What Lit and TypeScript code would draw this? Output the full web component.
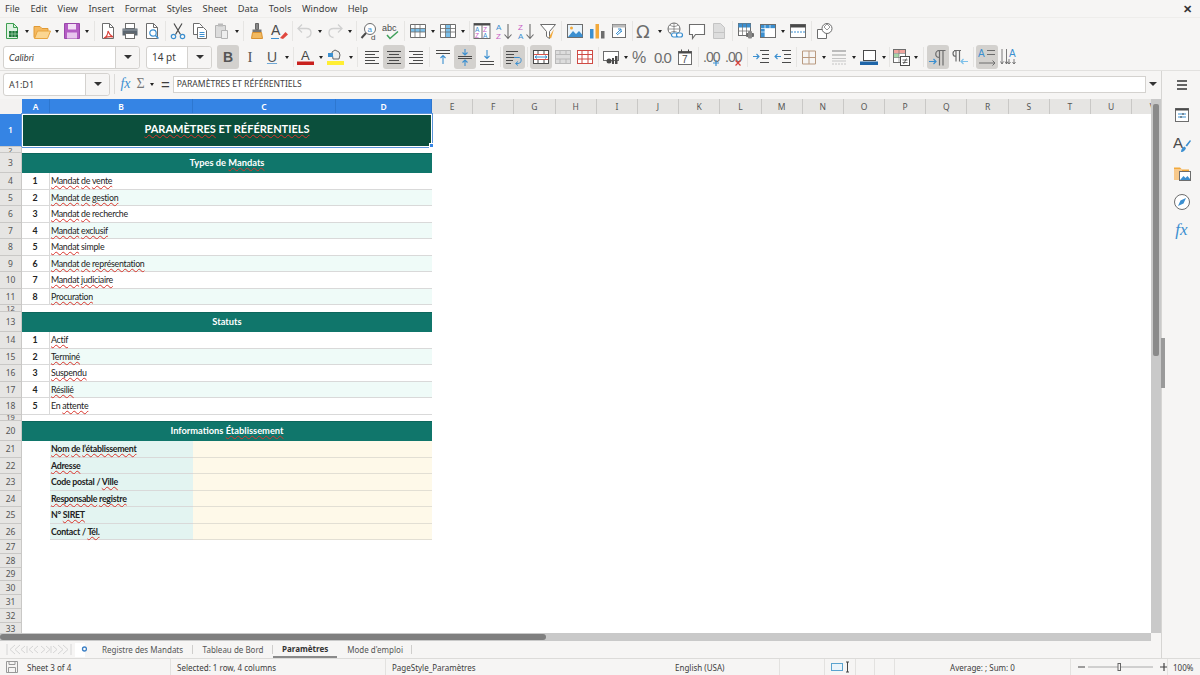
import { LitElement, html, css, svg, nothing } from 'lit';
import { customElement } from 'lit/decorators.js';

const G = '#6d6d6d';
const D = '#4a4a4a';
const B = '#3b8fd0';
const LB = '#7cc0ea';

const lines = (ys: number[][], c = D) =>
  ys.map(([x1, y, x2]) => svg`<path d="M${x1} ${y}H${x2}" stroke=${c} fill="none"/>`);

const doc = (c = G, f = '#fff') => svg`<path d="M3.5 1.5h7l4 4v11h-11z" fill=${f} stroke=${c}/><path d="M10.5 1.5v4h4" fill="none" stroke=${c}/>`;

const ICONS: Record<string, unknown> = {
  new: svg`<path d="M3.5 1.5h7l4 4v11h-11z" fill="#dff2e2" stroke="#3f9f52"/><path d="M10.5 1.5v4h4" fill="none" stroke="#3f9f52"/><rect x="6" y="9" width="9" height="6" fill="#1e7a3a"/><path d="M9 9v6M12 9v6M6 12h9" stroke="#bfe5c6" stroke-width=".6"/>`,
  open: svg`<path d="M1 4.5h6l2 2h6v3H5l-2.500 6H1z" fill="#f5b95f" stroke="#e09a35"/><path d="M4.500 9h13l-3 7.500H1.500z" fill="#fbd691" stroke="#e8a540"/>`,
  save: svg`<path d="M1.500 1.500h15v15h-15z" fill="#b45cc4" stroke="#9a46aa"/><rect x="5" y="2" width="8" height="5.500" fill="#f3def6"/><rect x="4" y="10.500" width="10" height="6" fill="#e8c5ee"/>`,
  pdf: svg`${doc()}<path d="M9 9c0 3-2 6-4 7 3-1 6-2 9-1-2-1-4-3-5-6z" fill="none" stroke="#d9413a" stroke-width="1.100"/>`,
  print: svg`<rect x="4.500" y="1.500" width="9" height="5" fill="#fff" stroke="${G}"/><path d="M1.500 6.500h15v7h-15z" fill="#5c6670"/><rect x="4.500" y="11.500" width="9" height="5" fill="#fff" stroke="${G}"/><path d="M2 8h14" stroke="#9aa3ab"/>`,
  preview: svg`${doc()}<circle cx="10" cy="11" r="3.200" fill="#fff" stroke="${B}" stroke-width="1.200"/><path d="M12.500 13.500l3 3" stroke="${B}" stroke-width="1.500"/>`,
  cut: svg`<path d="M5 1.500l6.500 11M13 1.500L6.500 12.500" stroke="${D}" stroke-width="1.200" fill="none"/><circle cx="4.500" cy="14.500" r="2.200" fill="none" stroke="${B}" stroke-width="1.200"/><circle cx="13.500" cy="14.500" r="2.200" fill="none" stroke="${B}" stroke-width="1.200"/>`,
  copy: svg`<path d="M2.500 1.500h6l3 3v8h-9z" fill="#fff" stroke="${G}"/><path d="M6.500 5.500h6l3 3v8h-9z" fill="#fff" stroke="${G}"/><path d="M8.500 10.500h5M8.500 12.500h5M8.500 14.500h5" stroke="${B}"/>`,
  paste: svg`<path d="M2.500 3.500h10v12h-10z" fill="#dcdcdc" stroke="#b4b4b4"/><rect x="5" y="1.500" width="5" height="3" fill="#bbb"/><path d="M8.500 8.500h6v8h-6z" fill="#eee" stroke="#b4b4b4"/>`,
  clone: svg`<path d="M7.500 1.500h3v6h-3z" fill="#888" stroke="#666"/><path d="M4.500 7.500h9v3h-9z" fill="#777"/><path d="M4.500 10.500h9l1 6h-11z" fill="#f2b95f" stroke="#d99130"/>`,
  clear: svg`<text x="1" y="13" font-size="14" font-family="Liberation Sans" fill="${D}">A</text><path d="M10 16l5.500-6 2.500 2.500-5 4.500z" fill="#e0483f"/><path d="M1 16.500h8" stroke="${B}"/>`,
  undo: svg`<path d="M6 2.500L2 6.500l4 4M2.500 6.500h8c6 0 6 8 0 9" fill="none" stroke="#d0d0d0" stroke-width="1.300"/>`,
  redo: svg`<path d="M12 2.500l4 4-4 4M15.500 6.500h-8c-6 0-6 8 0 9" fill="none" stroke="#d0d0d0" stroke-width="1.300"/>`,
  find: svg`<circle cx="10" cy="7" r="5.500" fill="#fff" stroke="${G}"/><text x="7.500" y="10" font-size="8" font-family="Liberation Sans" fill="${B}">a</text><path d="M6 11l-4.500 5" stroke="${D}" stroke-width="2"/><text x="11" y="17.500" font-size="8" font-family="Liberation Sans" fill="${D}">d</text>`,
  spell: svg`<text x="0" y="9" font-size="9" font-family="Liberation Sans" fill="${D}">abc</text><path d="M5 13l3 3.500 8-7" fill="none" stroke="#3fa05a" stroke-width="1.500"/>`,
  row: svg`<path d="M1.500 2.500h15v13h-15z" fill="#fff" stroke="${G}"/><rect x="2" y="6.500" width="14" height="3.500" fill="${LB}"/><path d="M6 3v12M11 3v12M2 6.500h14M2 10h14" stroke="${G}" stroke-width=".8"/>`,
  col: svg`<path d="M1.500 2.500h15v13h-15z" fill="#fff" stroke="${G}"/><rect x="6.500" y="3" width="5" height="12" fill="${LB}"/><path d="M6.500 3v12M11.500 3v12M2 6.500h14M2 10h14" stroke="${G}" stroke-width=".8"/>`,
  sort: svg`<rect x="1" y="1.500" width="16" height="15" fill="#fff" stroke="${G}"/><path d="M1 2.500h16" stroke="${D}" stroke-width="2"/><path d="M9 3v13" stroke="${G}"/><text x="2" y="9.500" font-size="6.500" font-family="Liberation Sans" fill="${B}">A</text><text x="2" y="15.500" font-size="6.500" font-family="Liberation Sans" fill="#c75cc4">Z</text><text x="10" y="9.500" font-size="6.500" font-family="Liberation Sans" fill="#c75cc4">Z</text><text x="10" y="15.500" font-size="6.500" font-family="Liberation Sans" fill="${B}">A</text>`,
  asc: svg`<text x="1" y="8" font-size="8" font-family="Liberation Sans" fill="${B}">A</text><text x="1" y="16.500" font-size="8" font-family="Liberation Sans" fill="#c75cc4">Z</text><path d="M13 2v14M9.500 12.500l3.500 4 3.500-4" fill="none" stroke="${G}" stroke-width="1.100"/>`,
  desc: svg`<text x="1" y="8" font-size="8" font-family="Liberation Sans" fill="#c75cc4">Z</text><text x="1" y="16.500" font-size="8" font-family="Liberation Sans" fill="${B}">A</text><path d="M13 2v14M9.500 12.500l3.500 4 3.500-4" fill="none" stroke="${G}" stroke-width="1.100"/>`,
  filter: svg`<path d="M1.500 2.500h15l-6 7v7l-3-2v-5z" fill="#fff" stroke="${G}"/><path d="M15 7l-5 8 2 1.500z" fill="#f2a93b"/>`,
  image: svg`<rect x="1.500" y="2.500" width="15" height="13" fill="#eaf4fb" stroke="${G}"/><circle cx="5.500" cy="6" r="1.500" fill="#f2a93b"/><path d="M2 15l5-6 3 3 3-3 3.500 4v2z" fill="${B}"/>`,
  chart: svg`<rect x="2" y="7" width="3.500" height="9.500" fill="${B}"/><rect x="7.500" y="2" width="3.500" height="14.500" fill="#f2a93b"/><rect x="13" y="9" width="3.500" height="7.500" fill="${G}"/>`,
  pivot: svg`<rect x="2.500" y="2.500" width="13" height="13" fill="#fff" stroke="${G}"/><rect x="2.500" y="2.500" width="13" height="3" fill="#bbb"/><path d="M6 12l5-5M11 7H8M11 7v3M7 13l5-4" fill="none" stroke="${B}"/>`,
  omega: svg`<text x="0" y="15.500" font-size="18" font-family="DejaVu Sans" fill="${G}">Ω</text>`,
  link: svg`<circle cx="8" cy="7" r="6" fill="#fff" stroke="${G}"/><path d="M2 7h12M8 1v12M4 3c2 2 6 2 8 0M4 11c2-2 6-2 8 0" stroke="${G}" stroke-width=".7" fill="none"/><rect x="5.500" y="11" width="6" height="4" rx="2" fill="#fff" stroke="${B}" stroke-width="1.200"/><rect x="10.500" y="11" width="6" height="4" rx="2" fill="#fff" stroke="${B}" stroke-width="1.200"/>`,
  comment: svg`<path d="M1.500 2.500h15v10h-9l-3 4v-4h-3z" fill="#fff" stroke="${G}" stroke-width="1.100"/>`,
  header: svg`<path d="M3.500 1.500h7l4 4v11h-11z" fill="#ddd" stroke="#c4c4c4"/><path d="M4 10.500h10" stroke="#c4c4c4"/>`,
  hf: svg`<rect x="1.500" y="1.500" width="12" height="12" fill="#fff" stroke="${G}"/><rect x="1.500" y="1.500" width="12" height="4" fill="${B}"/><path d="M5.500 2v11M9.500 2v11M2 9h11" stroke="${G}" stroke-width=".7"/><rect x="9" y="11" width="8" height="4" rx="1" fill="${G}"/><rect x="11" y="9" width="4" height="7.500" rx="1" fill="#888"/>`,
  freeze: svg`<rect x="1.500" y="2.500" width="15" height="13" fill="#fff" stroke="${G}"/><rect x="2" y="3" width="14" height="3.500" fill="${B}"/><rect x="2" y="3" width="4" height="12" fill="${B}"/><path d="M6 3v12M11 3v12M2 6.500h14M2 10h14" stroke="#fff" stroke-width=".7"/>`,
  split: svg`<rect x="1.500" y="2.500" width="15" height="13" fill="#fff" stroke="${G}"/><path d="M1.500 2.500h15v3h-15z" fill="${D}"/><path d="M2 10h14" stroke="${B}" stroke-dasharray="2 1"/>`,
  shapes: svg`<path d="M1.500 7.500h9v9h-9z" fill="#fff" stroke="${G}"/><circle cx="11" cy="6.500" r="5" fill="#fff" stroke="${G}"/><path d="M8 5l3-3 3 3-3 3z" fill="none" stroke="${G}" stroke-width=".7"/>`,
  left: lines([[2, 3.500, 16], [2, 6.500, 12], [2, 9.500, 16], [2, 12.500, 12], [2, 15.500, 16]]),
  center: lines([[2, 3.500, 16], [4, 6.500, 14], [2, 9.500, 16], [4, 12.500, 14], [2, 15.500, 16]]),
  right: lines([[2, 3.500, 16], [6, 6.500, 16], [2, 9.500, 16], [6, 12.500, 16], [2, 15.500, 16]]),
  top: svg`${lines([[2, 2.500, 16], [2, 5.500, 16]])}<path d="M9 16V7.500M6.500 10L9 7.500l2.500 2.500" fill="none" stroke="${B}" stroke-width="1.100"/>`,
  mid: svg`${lines([[2, 8.500, 16], [2, 10.500, 16]])}<path d="M9 1v6M6.500 4.500L9 7l2.500-2.500M9 18v-6M6.500 14.500L9 12l2.500 2.500" fill="none" stroke="${B}" stroke-width="1.100"/>`,
  bottom: svg`${lines([[2, 13.500, 16], [2, 16.500, 16]])}<path d="M9 2v8.500M6.500 8L9 10.500 11.500 8" fill="none" stroke="${B}" stroke-width="1.100"/>`,
  wrap: svg`${lines([[1, 3.500, 13], [1, 6.500, 9], [1, 9.500, 13], [1, 12.500, 8], [1, 15.500, 6]])}<path d="M9 9.500h5c3 0 3 6-1 6h-2M13 13.500l-2.500 2 2.500 2" fill="none" stroke="${B}"/>`,
  merge: svg`<rect x="1.500" y="2.500" width="15" height="13" fill="#fff" stroke="${D}"/><path d="M2 6.500h14M2 11.500h14" stroke="#d8534b"/><path d="M6 3v3M12 3v3M6 12v3M12 12v3" stroke="${D}"/><path d="M3 9h12M3 9l2-1.500M3 9l2 1.500M15 9l-2-1.500M15 9l-2 1.500" stroke="${B}" fill="none"/>`,
  unmergeg: svg`<rect x="1.500" y="2.500" width="15" height="13" fill="#ddd" stroke="#b9b9b9"/><path d="M2 6.500h14M2 11h14M6 3v3M12 3v3M6 11v4M12 11v4" stroke="#b9b9b9"/>`,
  unmerge: svg`<rect x="1.500" y="2.500" width="15" height="13" fill="#fff" stroke="#cf4a44"/><path d="M2 6.500h14M2 11h14M6 3v12M12 3v12" stroke="#cf4a44"/>`,
  currency: svg`<rect x="1.500" y="3.500" width="15" height="9" fill="#fff" stroke="${G}"/><circle cx="7" cy="13" r="2.500" fill="${D}"/><rect x="10" y="10" width="2" height="6" fill="${D}"/><rect x="13" y="8" width="2.500" height="8" fill="${D}"/>`,
  percent: svg`<text x="0" y="15" font-size="16" font-family="Liberation Sans" fill="${G}">%</text>`,
  number: svg`<text x="0" y="15" font-size="15" letter-spacing="-1.500" font-family="Liberation Sans" fill="${G}">0.0</text>`,
  date: svg`<rect x="2.500" y="3.500" width="13" height="13" fill="#fff" stroke="${G}"/><path d="M2.500 3.500h13v2h-13z" fill="${D}"/><path d="M5.500 1.500v3M12.500 1.500v3" stroke="${D}"/><text x="6" y="15" font-size="10" font-family="Liberation Sans" fill="${D}">7</text>`,
  adddec: svg`<text x="0" y="14" font-size="14" letter-spacing="-1" font-family="Liberation Sans" fill="${G}">.00</text><path d="M13 12v6M10 15h6" stroke="${B}" stroke-width="1.200"/>`,
  deldec: svg`<text x="0" y="14" font-size="14" letter-spacing="-1" font-family="Liberation Sans" fill="${G}">.00</text><path d="M10.500 12.500l5 5M15.500 12.500l-5 5" stroke="#d9413a" stroke-width="1.200"/>`,
  indent: svg`${lines([[8, 2.500, 17], [10, 6.500, 17], [10, 10.500, 17], [8, 14.500, 17]])}<path d="M1 8.500h6M4.500 6L7 8.500 4.500 11" fill="none" stroke="${B}" stroke-width="1.100"/>`,
  outdent: svg`${lines([[8, 2.500, 17], [10, 6.500, 17], [10, 10.500, 17], [8, 14.500, 17]])}<path d="M7 8.500H1M3.500 6L1 8.500 3.500 11" fill="none" stroke="${B}" stroke-width="1.100"/>`,
  borders: svg`<path d="M2.500 3h13v13h-13zM2.500 9.500h13M9 3v13" fill="none" stroke="#b99a80" stroke-width="1"/>`,
  linestyle: svg`<path d="M2 3h14" stroke="#bbb" stroke-width="2"/><path d="M2 7h14" stroke="#bbb" stroke-width="1.500"/><path d="M2 10.500h14M2 13h14" stroke="#c4c4c4"/><path d="M2 16h14" stroke="#c4c4c4" stroke-dasharray="2 1"/>`,
  bcolor: svg`<rect x="3.500" y="2.500" width="12" height="10" fill="#fff" stroke="${D}"/><path d="M0 13.500h18v3.500H0z" fill="#1f65a8"/>`,
  cond: svg`<rect x="1.500" y="1.500" width="12" height="13" fill="#fff" stroke="${G}"/><rect x="2" y="2" width="11" height="3" fill="#f1a49d"/><rect x="2" y="6" width="5" height="3.500" fill="#a5d6a7"/><path d="M7 2v12M2 5.500h11M2 9.500h11" stroke="${G}" stroke-width=".6"/><rect x="8.500" y="8.500" width="9" height="9" fill="#fff" stroke="${D}"/><path d="M10.500 12h5M10.500 14.500h5M14.500 10.500l-3 5.500" stroke="${D}" stroke-width=".8"/>`,
  ltr: svg`<path d="M8.500 2.500h8M10.500 2.500v15M14 2.500v15M10.500 2.500c-5 0-5 7 0 7" fill="none" stroke="${G}" stroke-width="1.200"/><path d="M0 13.500h7M4.500 11L7 13.500 4.500 16" fill="none" stroke="${B}" stroke-width="1.200"/>`,
  rtl: svg`<path d="M3 2.500h7M5 2.500v11M8.500 2.500v11M5 2.500c-4 0-4 6 0 6" fill="none" stroke="${G}" stroke-width="1.200"/><path d="M17 13.500h-7M12.500 11L10 13.500l2.500 2.500" fill="none" stroke="${LB}" stroke-width="1.200"/>`,
  thoriz: svg`<text x="0" y="9" font-size="10" font-family="Liberation Sans" fill="${B}">A</text><path d="M9 2.500h8M9 6.500h8" stroke="${G}"/><path d="M1 15h16M14.500 12.500L17 15l-2.500 2.500" fill="none" stroke="${G}"/>`,
  tvert: svg`<text x="9" y="9" font-size="10" font-family="Liberation Sans" fill="${B}">A</text><path d="M2 1v15M6.500 1v15M9 11v5M14 11v5M.5 13.500L2 16l1.500-2.500M5 13.500L6.500 16 8 13.500M7.500 14L9 16l1.500-2M12.500 14L14 16l1.500-2" fill="none" stroke="${G}" stroke-width=".9"/>`,
  props: svg`<rect x="2.500" y="2.500" width="13" height="13" fill="#fff" stroke="${G}"/><path d="M2.500 2.500h13v2h-13z" fill="${D}"/><path d="M5 8h8M5 11h8" stroke="${B}"/><path d="M10 7v2M8 10v2" stroke="${D}"/>`,
  styles: svg`<text x="0" y="13" font-size="15" font-family="Liberation Sans" fill="${D}">A</text><path d="M8 17c0-3 2-5 3.500-5.500l1.500 1.500c-.5 2-3 4.500-5 4zM12.500 10.500L17 5l1 1-4 5.500z" fill="${B}"/>`,
  gallery: svg`<path d="M1 3.500h6l2 2h7v2H1z" fill="#f2a93b"/><path d="M1 5h8v11H1z" fill="#f8c98b"/><rect x="6.500" y="7.500" width="11" height="9" fill="#fff" stroke="${G}"/><path d="M7 16l3.500-4 2 2 2-2 2.500 3v1z" fill="${B}"/>`,
  nav: svg`<circle cx="9" cy="9" r="7.500" fill="#fff" stroke="${G}"/><path d="M5 13l2.500-5.500L13 5l-2.500 5.500z" fill="${B}"/>`,
};

const icon = (n: string, size = 18) => html`<svg width=${size} height=${size} viewBox="0 0 18 18">${ICONS[n]}</svg>`;

// [icon, has dropdown, active] or a number for a separator of that width
type Tool = [string, boolean?, boolean?] | number;

const TB1: Tool[] = [
  ['new', true], ['open', true], ['save', true], 6,
  ['pdf'], ['print'], ['preview'], 4,
  ['cut'], ['copy'], ['paste', true], 5,
  ['clone'], ['clear'], 4,
  ['undo', true], ['redo', true], 4,
  ['find'], ['spell'], 5,
  ['row', true], ['col', true], 4,
  ['sort'], ['asc'], ['desc'], ['filter'], 5,
  ['image'], ['chart'], ['pivot'], 4,
  ['omega', true], ['link'], ['comment'], ['header'], 5,
  ['hf'], ['freeze', true], ['split'], 5,
  ['shapes'],
];

const TB2A: Tool[] = [
  ['left'], ['center', false, true], ['right'], 5,
  ['top'], ['mid', false, true], ['bottom'], 5.5,
  ['wrap', false, true], 5, ['merge', false, true], ['unmergeg'], ['unmerge'], 4,
  ['currency', true], ['percent'], ['number'], ['date'], 5,
  ['adddec'], ['deldec'], 5,
  ['indent'], ['outdent'], 4,
  ['borders', true], ['linestyle', true], ['bcolor', true], 2,
  ['cond', true], 7,
  ['ltr', false, true], ['rtl'], 5,
  ['thoriz', false, true], ['tvert'],
];

type Row =
  | { h: number; n?: undefined }
  | { h: number; title: string }
  | { h: number; head: string }
  | { h: number; n: number; text: string; alt: boolean }
  | { h: number; label: string };

const items = (list: string[]): Row[] =>
  list.map((text, i) => ({ h: 16.5, n: i + 1, text, alt: i % 2 === 1 }));

// a leading ~ marks a word the spell checker underlines
const ROWS: Row[] = [
  { h: 33, title: '~PARAMÈTRES ET ~RÉFÉRENTIELS' },
  { h: 6 },
  { h: 20, head: 'Types de ~Mandats' },
  ...items(['~Mandat ~de ~vente', '~Mandat ~de ~gestion', '~Mandat ~de recherche', '~Mandat ~exclusif', '~Mandat simple',
    '~Mandat ~de ~représentation', '~Mandat ~judiciaire', '~Procuration']),
  { h: 7 },
  { h: 20, head: 'Statuts' },
  ...items(['~Actif', '~Terminé', '~Suspendu', '~Résilié', 'En ~attente']),
  { h: 6.5 },
  { h: 20, head: 'Informations ~Établissement' },
  ...['~Nom ~de ~l’établissement', '~Adresse', 'Code postal / ~Ville', '~Responsable ~registre', 'N° ~SIRET', 'Contact / ~Tél.']
    .map((label) => ({ h: 16.5, label })),
  ...Array.from({ length: 7 }, () => ({ h: 13.75 })),
];

const COLS = 'EFGHIJKLMNOPQRSTUV'.split('');

const spell = (t: string) =>
  html`<span>${t.split(' ').map((w, i) => html`${i ? ' ' : ''}${w.startsWith('~') ? html`<span class="sp">${w.slice(1)}</span>` : w}`)}</span>`;

@customElement('app-root')
export class AppRoot extends LitElement {
  static styles = css`
    :host {
      display: block;
      width: 1200px;
      height: 675px;
      overflow: hidden;
      background: #f6f5f4;
      color: #3d3d3d;
      font: 9.3px 'Noto Sans', sans-serif;
    }
    svg { display: block; flex: none; }
    .app { display: flex; flex-direction: column; height: 675px; }

    .menu { height: 17px; display: flex; align-items: center; padding-left: 5px; gap: 10.5px; }
    .close { margin-left: auto; margin-right: 8px; font-size: 11px; font-weight: 700; color: #333; }

    .tb { display: flex; align-items: center; flex: none; }
    .tb1 { height: 27px; padding-left: 1px; border-top: 1px solid #eeedeb; box-sizing: border-box; }
    .tb2 { height: 26px; padding-left: 3px; }
    .btn { width: 22px; height: 24px; display: flex; align-items: center; justify-content: center; border-radius: 3px; flex: none; }
    .btn.on { background: #d3d1ce; }
    .arrow { width: 8px; display: flex; justify-content: center; flex: none; }
    .arrow::after { content: ''; border: 2.5px solid transparent; border-top: 3px solid #222; border-bottom: 0; }
    .sep { flex: none; display: flex; justify-content: center; }
    .sep::after { content: ''; width: 1px; height: 20px; background: #e6e5e3; }
    .sep4 { width: 4px; }
    .sep55 { width: 5.5px; }

    .combo { display: flex; height: 23px; border: 1px solid #d4d2cf; border-radius: 3px; background: #fff; box-sizing: border-box; flex: none; align-items: center; }
    .combo span { flex: 1; padding-left: 5px; white-space: nowrap; }
    .combo i { width: 23px; height: 100%; background: #f6f5f4; border-left: 1px solid #d4d2cf; display: flex; align-items: center; justify-content: center; border-radius: 0 3px 3px 0; }
    .combo i::after { content: ''; border: 4px solid transparent; border-top: 4px solid #333; border-bottom: 0; }
    .font { width: 137px; margin-right: 6px; font-style: italic; font-family: 'Lato', sans-serif; }
    .size { width: 66px; margin-right: 5px; font-size: 10px; }
    .fmt { font: 15px 'Liberation Serif', serif; color: #555; display: flex; align-items: center; justify-content: center; }
    .bold { font: 700 14px 'Liberation Sans', sans-serif; }
    .under { font: 14px 'Liberation Sans', sans-serif; text-decoration: underline; text-decoration-color: #6fa8d6; }

    .middle { flex: 1; display: flex; min-height: 0; border-top: 1px solid #e2e1df; }
    .work { width: 1161px; display: flex; flex-direction: column; border-right: 1px solid #d6d5d3; position: relative; }
    .side { flex: 1; display: flex; flex-direction: column; align-items: center; padding-top: 8px; padding-left: 1px; gap: 10.9px; }
    .burger { margin-bottom: 4px; }
    .sidefx { font: italic 17px 'Liberation Serif', serif; color: #3b8fd0; line-height: 18px; }
    .handle { position: absolute; left: 1161px; top: 267px; width: 4px; height: 50px; background: #9a9a9a; }

    .fx { height: 28px; padding: 0 0 2px 3px; display: flex; align-items: center; box-sizing: border-box; flex: none; }
    .name { width: 107px; margin-right: 4px; }
    .name span { font-size: 9px; }
    .fxsep { width: 1px; height: 20px; background: #dcdbd9; margin-right: 3px; }
    .fxbtn { width: 15px; display: flex; justify-content: center; flex: none; color: #555; }
    .fxi { font: italic 14px 'Liberation Serif', serif; color: #3b8fd0; }
    .sigma { font: 14px 'Liberation Serif', serif; color: #777; }
    .eq { font: 15px 'Liberation Sans', sans-serif; margin: 0 3px 0 5px; }
    .input { width: 973px; height: 17px; background: #fff; border: 1px solid #d4d2cf; box-sizing: border-box; display: flex; align-items: center; padding-left: 3px; font-size: 8.6px; flex: none; }
    .fxarrow { width: 14px; display: flex; justify-content: center; }
    .fxarrow::after { content: ''; border: 4px solid transparent; border-top: 4px solid #333; border-bottom: 0; }

    .view { flex: 1; display: flex; min-height: 0; }
    .sheet { width: 1151px; overflow: hidden; background: #fff; display: flex; flex-direction: column; position: relative; }
    .cols { display: flex; height: 15px; flex: none; font-size: 8.5px; color: #555; }
    .corner { width: 22px; background: #f3f2f1; flex: none; }
    .ch { display: flex; align-items: center; justify-content: center; background: #e6e5e3; border-right: 1px solid #c9c8c6; box-sizing: border-box; width: 41.2px; flex: none; }
    .ch.sel { background: #3584e4; color: #fff; font-weight: 600; border-right-color: #2d77d0; }
    .a { width: 28px; }
    .b, .c { width: 143px; }
    .d { width: 96px; }

    .row { display: flex; flex: none; }
    .rh { width: 22px; flex: none; background: #e6e5e3; border-bottom: 1px solid #c9c8c6; border-right: 1px solid #c9c8c6; box-sizing: border-box; display: flex; align-items: center; justify-content: center; font-size: 8.5px; color: #555; overflow: hidden; }
    .rh.sel { background: #3584e4; color: #fff; font-weight: 600; padding-bottom: 2px; }
    .tiny { font-size: 7.5px; }
    .body { width: 410px; display: flex; flex: none; align-items: stretch; font: 8.8px 'Lato', sans-serif; letter-spacing: -0.27px; color: #222; box-sizing: border-box; }
    .title { background: #0b4f3c; color: #fff; justify-content: center; align-items: center; font-size: 11px; letter-spacing: 0; font-weight: 700; border: 1px solid #fff; box-shadow: 0 0 0 1px #5b94da; padding-bottom: 5px; }
    .head { background: #10766b; color: #fff; justify-content: center; align-items: center; font-size: 9.3px; letter-spacing: 0; font-weight: 700; border-top: 1px solid #0d665c; padding-bottom: 3px; }
    .num { width: 28px; box-sizing: border-box; display: flex; align-items: center; justify-content: center; font-weight: 700; border-right: 1px solid #d9d9d9; padding-right: 1px; flex: none; }
    .txt { flex: 1; padding-left: 1px; white-space: pre; line-height: 15px; }
    .item { border-bottom: 1px solid #d9d9d9; }
    .alt .txt { background: #effbf8; }
    .blankA { width: 28px; flex: none; }
    .lbl { width: 143px; box-sizing: border-box; background: #e3f4f1; font-weight: 700; padding-left: 1px; line-height: 15px; white-space: pre; border-bottom: 1px solid #d9d9d9; flex: none; }
    .val { flex: 1; background: #fef9e9; border-bottom: 1px solid #e2dfd4; }
    .sp { text-decoration: underline wavy #d9342b; text-decoration-thickness: 0.6px; text-underline-offset: 0.5px; text-decoration-skip-ink: none; }
    .grip { position: absolute; left: 429px; top: 44px; width: 5px; height: 5px; background: #3584e4; border: 1px solid #fff; box-sizing: border-box; }

    .vs { width: 10px; flex: none; background: #c9c9c9; padding: 5px 2px 0; box-sizing: border-box; }
    .vs div { height: 252px; background: #8a8a8a; border-radius: 2px; }
    .hs { height: 8px; flex: none; background: #c9c9c9; width: 1151px; display: flex; align-items: center; }
    .hs div { width: 546px; height: 6px; background: #7f7f7f; border-radius: 3px; }

    .tabs { height: 17px; flex: none; display: flex; align-items: center; font-size: 8px; color: #555; }
    .navs { width: 66px; height: 13px; margin-left: 6px; flex: none; }
    .addsheet { width: 17px; flex: none; display: flex; align-items: center; margin-left: 3px; }
    .tab { height: 100%; display: flex; align-items: center; box-sizing: border-box; padding: 0 9.5px 0 10px; white-space: nowrap; background: linear-gradient(#cfcecc, #cfcecc) right center / 1px 9px no-repeat; }
    .tab.cur { font-weight: 700; border-bottom: 2px solid #8a8a8a; background: none; color: #333; padding: 0 9px; }

    .status { height: 17px; flex: none; display: flex; align-items: center; border-top: 1px solid #dcdbd9; font-size: 8px; box-sizing: border-box; }
    .st { height: 100%; display: flex; align-items: center; box-sizing: border-box; border-right: 1px solid #e3e2e0; flex: none; white-space: nowrap; padding-left: 6px; }
    .st svg { margin-right: 9px; }
    .mid { justify-content: center; padding-left: 0; }
    .pct { padding-left: 5px; }
  `;

  private tools(list: Tool[]) {
    return list.map((t) => {
      if (typeof t === 'number') return html`<div class="sep" style="width:${t}px"></div>`;
      const [n, arrow, on] = t;
      return html`<div class="btn ${on ? 'on' : ''}">${icon(n)}</div>${arrow ? html`<div class="arrow"></div>` : nothing}`;
    });
  }

  private row(r: any, i: number) {
    const label = i + 1;
    let body: unknown = html`<div class="body"></div>`;
    if (r.title) body = html`<div class="body title">${spell(r.title)}</div>`;
    else if (r.head) body = html`<div class="body head">${spell(r.head)}</div>`;
    else if (r.text) body = html`<div class="body item ${r.alt ? 'alt' : ''}"><div class="num">${r.n}</div><div class="txt">${spell(r.text)}</div></div>`;
    else if (r.label) body = html`<div class="body"><div class="blankA"></div><div class="lbl">${spell(r.label)}</div><div class="val"></div></div>`;
    return html`<div class="row" style="height:${r.h}px"><div class="rh ${i === 0 ? 'sel' : ''}"><span class=${r.h > 7 ? '' : 'tiny'}>${label}</span></div>${body}</div>`;
  }

  render() {
    return html`
      <div class="app">
        <div class="menu">
          ${['File', 'Edit', 'View', 'Insert', 'Format', 'Styles', 'Sheet', 'Data', 'Tools', 'Window', 'Help'].map((m) => html`<span>${m}</span>`)}
          <span class="close">✕</span>
        </div>
        <div class="tb tb1">${this.tools(TB1)}</div>
        <div class="tb tb2">
          <div class="combo font"><span>Calibri</span><i></i></div>
          <div class="combo size"><span>14 pt</span><i></i></div>
          <div class="btn on fmt bold">B</div>
          <div class="btn fmt">I</div>
          <div class="btn fmt under">U</div><div class="arrow"></div>
          <div class="sep sep4"></div>
          <div class="btn"><svg width="18" height="18" viewBox="0 0 18 18"><text x="4" y="12" font-size="13" font-family="Liberation Sans" fill="#444">A</text><rect x="0" y="13.500" width="17" height="3.500" fill="#c9211e"/></svg></div><div class="arrow"></div>
          <div class="btn"><svg width="18" height="18" viewBox="0 0 18 18"><path d="M5 4l3-2 2 1 2 1 1 3-1 4H6z" fill="#eee" stroke="#666"/><path d="M1 5h5v4H1z" fill="#3b8fd0"/><rect x="0" y="13" width="17" height="4" fill="#ffee33"/></svg></div><div class="arrow"></div>
          <div class="sep sep55"></div>
          ${this.tools(TB2A)}
        </div>
        <div class="middle">
          <div class="work">
            <div class="fx">
              <div class="combo name"><span>A1:D1</span><i></i></div>
              <div class="fxsep"></div>
              <div class="fxbtn fxi">fx</div>
              <div class="fxbtn sigma">Σ</div><div class="arrow"></div>
              <div class="eq">=</div>
              <div class="input">PARAMÈTRES ET RÉFÉRENTIELS</div>
              <div class="fxarrow"></div>
            </div>
            <div class="view">
              <div class="sheet">
                <div class="cols">
                  <div class="corner"></div>
                  <div class="ch sel a">A</div><div class="ch sel b">B</div><div class="ch sel c">C</div><div class="ch sel d">D</div>
                  ${COLS.map((c) => html`<div class="ch">${c}</div>`)}
                </div>
                ${ROWS.map((r, i) => this.row(r, i))}
                <div class="grip"></div>
              </div>
              <div class="vs"><div></div></div>
            </div>
            <div class="hs"><div></div></div>
            <div class="tabs">
              <svg class="navs" viewBox="0 0 66 13" fill="none" stroke="#d6d6d6">
                <path d="M1 1v11M9 2L4 6.500 9 11M14 2L9 6.500l5 4.500M19 3l-4 3.500 4 3.500M21 3v7M27 3l-4 3.500 4 3.500M32 3l-4 3.500 4 3.500M35 3l4 3.500-4 3.500M40 3l4 3.500-4 3.500M45 3v7M47 3l4 3.500-4 3.500M52 2l5 4.500-5 4.500M57 2l5 4.500-5 4.500M65 1v11" />
              </svg>
              <div class="addsheet">
                <svg width="12" height="15" viewBox="0 0 12 15"><rect x="0" y="1" width="10" height="14" fill="#fff"/><circle cx="9.500" cy="7" r="2" fill="none" stroke="#3b7fc4" stroke-width="1.300"/></svg>
              </div>
              <div class="tab">Registre des Mandats</div>
              <div class="tab">Tableau de Bord</div>
              <div class="tab cur">Paramètres</div>
              <div class="tab">Mode d'emploi</div>
            </div>
            <div class="handle"></div>
          </div>
          <div class="side">
            <svg class="burger" width="12" height="12" viewBox="0 0 12 12"><path d="M1 2h10M1 6h10M1 10h10" stroke="#333" stroke-width="1.300"/></svg>
            ${icon('props')}
            ${icon('styles')}
            ${icon('gallery')}
            ${icon('nav')}
            <span class="sidefx">fx</span>
          </div>
        </div>
        <div class="status">
          <div class="st" style="width:171px">
            <svg width="12" height="12" viewBox="0 0 12 12" fill="none" stroke="#999"><path d="M.5.5h11v11H.5z"/><path d="M3 .5v3h6v-3M2.500 11.500v-5h7v5"/></svg>Sheet 3 of 4
          </div>
          <div class="st" style="width:215px">Selected: 1 row, 4 columns</div>
          <div class="st" style="width:283px;border:0">PageStyle_Paramètres</div>
          <div class="st" style="width:111px">English (USA)</div>
          <div class="st" style="width:45px"></div>
          <div class="st" style="width:31px">
            <svg width="20" height="12" viewBox="0 0 20 12" fill="none"><rect x=".5" y="2.500" width="11" height="7" fill="#eaf4fb" stroke="#5aa3cf"/><path d="M15 1h3M16.500 1v10M15 11h3" stroke="#444"/></svg>
          </div>
          <div class="st" style="width:19px"></div>
          <div class="st" style="width:20px"></div>
          <div class="st mid" style="width:176px">Average: ; Sum: 0</div>
          <div class="st" style="width:97px">
            <svg width="90" height="12" viewBox="0 0 90 12" fill="none" stroke="#444"><path d="M1 6h7M83 6h8M87 2v8" stroke-width="1.200"/><path d="M11 6h65" stroke="#aaa"/><rect x="41" y="2.500" width="2.500" height="7" fill="#f6f5f4" stroke="#666"/></svg>
          </div>
          <div class="pct">100%</div>
        </div>
      </div>
    `;
  }
}
